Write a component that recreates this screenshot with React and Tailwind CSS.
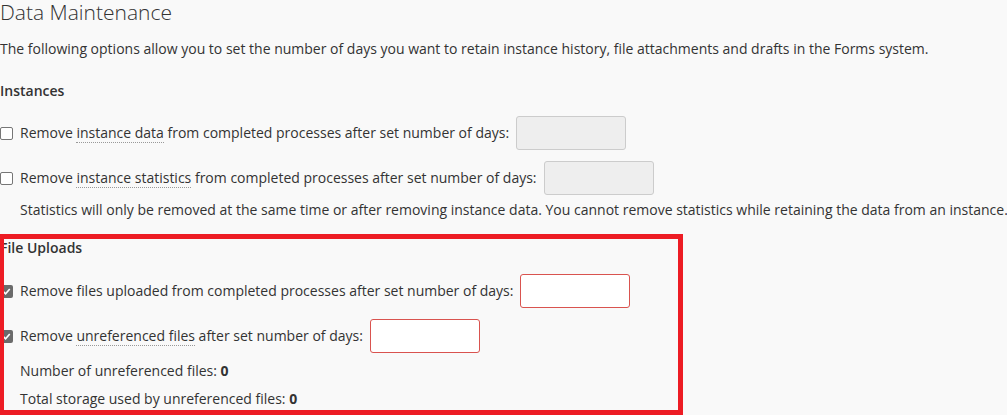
import React from 'react';

const Box = ({ checked }) =>
  checked ? (
    <span className="w-[13px] h-[13px] shrink-0 rounded-[2px] bg-[#6b6b6b] flex items-center justify-center">
      <svg width="9" height="9" viewBox="0 0 10 10" fill="none">
        <path d="M1.5 5.2 L4 7.6 L8.6 2.3" stroke="white" strokeWidth="1.8" />
      </svg>
    </span>
  ) : (
    <span className="w-[13px] h-[13px] shrink-0 rounded-[2px] border border-[#767676] bg-white" />
  );

const Term = ({ children }) => (
  <span className="border-b border-dotted border-[#999]">{children}</span>
);

const DaysInput = ({ error }) => (
  <input
    type="text"
    disabled={!error}
    className={`w-[110px] h-[34px] rounded-[3px] border ${
      error ? 'border-[#d9534f] bg-white' : 'border-[#ccc] bg-[#eee]'
    }`}
  />
);

const Row = ({ checked, error, children, className = '' }) => (
  <div className={`flex items-center h-[34px] ${className}`}>
    <Box checked={checked} />
    <span className="ml-[7px] whitespace-nowrap">{children}</span>
    <span className="ml-[7px]">
      <DaysInput error={error} />
    </span>
  </div>
);

export default function App() {
  return (
    <div
      className="relative w-[1007px] h-[415px] overflow-hidden bg-[#f9f9f9] text-[#333] text-[14px] leading-[20px]"
      style={{ fontFamily: '"Open Sans", "Liberation Sans", sans-serif' }}
    >
      <h2 className="text-[21px] font-light leading-[24px]">Data Maintenance</h2>
      <p className="mt-[15px]">
        The following options allow you to set the number of days you want to retain instance history, file attachments and drafts in the Forms system.
      </p>
      <h4 className="mt-[22px] font-semibold">Instances</h4>

      <Row className="mt-[15px]">
        Remove <Term>instance data</Term> from completed processes after set number of days:
      </Row>
      <Row className="mt-[11px]">
        Remove <Term>instance statistics</Term> from completed processes after set number of days:
      </Row>
      <p className="ml-5 mt-[5px] whitespace-nowrap">
        Statistics will only be removed at the same time or after removing instance data. You cannot remove statistics while retaining the data from an instance.
      </p>

      <h4 className="mt-[18px] font-semibold">File Uploads</h4>
      <Row checked error className="mt-[16px]">
        Remove files uploaded from completed processes after set number of days:
      </Row>
      <Row checked error className="mt-[11px]">
        Remove <Term>unreferenced files</Term> after set number of days:
      </Row>
      <p className="ml-5 mt-[8px]">
        Number of unreferenced files: <b className="font-bold">0</b>
      </p>
      <p className="ml-5 mt-[8px]">
        Total storage used by unreferenced files: <b className="font-bold">0</b>
      </p>

      <div className="absolute left-0 top-[234px] w-[683px] h-[181px] border-[5px] border-l-4 border-[#ed1c24] pointer-events-none" />
    </div>
  );
}
